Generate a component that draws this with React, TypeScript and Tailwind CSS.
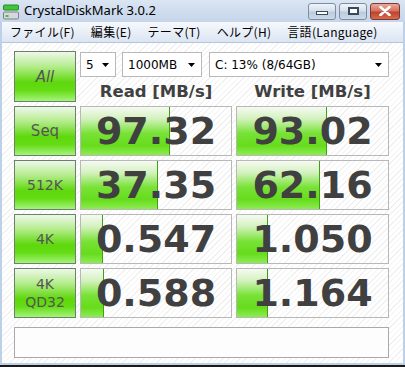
import React from "react";

const rows = [
  { label: "Seq", read: "97.32", rw: 89, write: "93.02", ww: 90 },
  { label: "512K", read: "37.35", rw: 77, write: "62.16", ww: 83 },
  { label: "4K", read: "0.547", rw: 22, write: "1.050", ww: 31 },
  { label: "4K QD32", read: "0.588", rw: 23, write: "1.164", ww: 31 },
];

const hatch =
  "bg-[repeating-linear-gradient(135deg,#ffffff_0px,#ffffff_3px,#f1f1f1_3px,#f1f1f1_4px)]";

function GreenButton({ label }: { label: string }) {
  const parts = label.split(" ");
  return (
    <div className="h-full border border-[#6d7f6d] bg-[linear-gradient(180deg,#eef8ea_0%,#b4ec8c_30%,#5ed80c_62%,#64dc14_78%,#a4f47a_100%)] flex flex-col items-center justify-center text-[#555] font-['DejaVu_Sans',sans-serif] leading-[18px]">
      {parts.length > 1 ? (
        <>
          <span className="text-[14px]">{parts[0]}</span>
          <span className="text-[14px]">{parts[1]}</span>
        </>
      ) : (
        <span className={label === "All" ? "text-[15px] italic" : label === "Seq" ? "text-[15px]" : "text-[14px]"}>
          {label}
        </span>
      )}
    </div>
  );
}

function ValueCell({ value, bar }: { value: string; bar: number }) {
  return (
    <div className={`relative h-[50px] border border-[#b8b8b8] ${hatch} overflow-hidden`}>
      <div
        className="absolute left-0 top-0 bottom-0 border-r border-[#3f9e12] bg-[linear-gradient(180deg,#f6faf2_0%,#d2f1bc_25%,#78e236_55%,#66dc1c_80%,#8cec52_100%)]"
        style={{ width: bar }}
      />
      <div className="relative h-full flex items-center justify-center font-['DejaVu_Sans',sans-serif] font-bold text-[38px] text-[#404040]">
        {value}
      </div>
    </div>
  );
}

function Select({ text, w }: { text: string; w: string }) {
  return (
    <div className={`${w} h-[25px] border border-[#b9b9b9] bg-white flex items-center justify-between pl-[5px] pr-[6px] font-['DejaVu_Sans',sans-serif] text-[12px] text-black`}>
      <span>{text}</span>
      <svg width="7" height="4" viewBox="0 0 7 4">
        <path d="M0 0h7L3.5 4z" fill="#000" />
      </svg>
    </div>
  );
}

function WinButton({ kind }: { kind: "min" | "max" | "close" }) {
  if (kind === "close") {
    return (
      <div className="w-[30px] h-[17px] rounded-[3px] border border-[#7a3a33] bg-[linear-gradient(180deg,#e9a99c_0%,#d7735f_45%,#c0432d_55%,#d56a4f_100%)] flex items-center justify-center">
        <svg width="12" height="10" viewBox="0 0 12 10">
          <path d="M1.5 1l9 8M10.5 1l-9 8" stroke="#fff" strokeWidth="2.6" strokeLinecap="round" />
        </svg>
      </div>
    );
  }
  return (
    <div className="w-[28px] h-[17px] rounded-[3px] border border-[#7d8ea3] bg-[linear-gradient(180deg,#eef3f9_0%,#d7e1ec_45%,#bccbdc_55%,#cdd9e6_100%)] flex items-center justify-center">
      {kind === "min" ? (
        <div className="w-[12px] h-[4px] border border-[#384a5e] bg-white mt-[3px]" />
      ) : (
        <div className="w-[11px] h-[8px] border-[2px] border-[#384a5e] bg-white" />
      )}
    </div>
  );
}

export default function App() {
  return (
    <div className="w-[405px] h-[367px] bg-[#bcd0e8] flex flex-col overflow-hidden">
      {/* title bar */}
      <div className="h-[22px] shrink-0 bg-[linear-gradient(180deg,#dbe6f3_0%,#cfdcee_50%,#c6d6ea_100%)] flex items-center pl-[3px] pr-[5px]">
        <svg width="16" height="16" viewBox="0 0 16 16" className="mt-[1px]">
          <rect x="0.5" y="1" width="15" height="5" rx="1" fill="#3fc63a" stroke="#2b8a27" />
          <rect x="0.5" y="8" width="15" height="7" rx="1" fill="#d5d8da" stroke="#7c8288" />
          <rect x="2.5" y="11" width="3" height="2" fill="#3fc63a" />
        </svg>
        <span className="ml-[5px] font-['Noto_Sans',sans-serif] text-[13px] text-black">CrystalDiskMark 3.0.2</span>
        <div className="ml-auto flex gap-[3px] items-center">
          <WinButton kind="min" />
          <WinButton kind="max" />
          <WinButton kind="close" />
        </div>
      </div>
      {/* frame + client */}
      <div className="flex-1 flex flex-col px-[2px] pb-[2px] border-b-[2px] border-[#1a1a1a]">
        <div className="h-[21px] shrink-0 bg-[linear-gradient(180deg,#f6f8fc_0%,#e9eff8_50%,#dbe5f2_100%)] border-b border-[#b6c6da] flex items-center gap-[16px] pl-[8px] font-['Noto_Sans_CJK_JP',sans-serif] text-[12px] tracking-[0.3px] text-black">
          <span>ファイル(F)</span>
          <span>編集(E)</span>
          <span>テーマ(T)</span>
          <span>ヘルプ(H)</span>
          <span>言語(Language)</span>
        </div>
        <div className={`flex-1 ${hatch} pl-[12px] pt-[8px]`}>
          <div className="grid grid-cols-[62px_152px_153px] gap-x-[4px] gap-y-[4px]">
            <div className="h-[51px]">
              <GreenButton label="All" />
            </div>
            <div className="col-span-2 flex flex-col">
              <div className="flex mt-[1px]">
                <Select text="5" w="w-[36px]" />
                <Select text="1000MB" w="w-[80px] ml-[6px]" />
                <Select text="C: 13% (8/64GB)" w="w-[180px] ml-[7px]" />
              </div>
              <div className="grid grid-cols-[152px_153px] gap-x-[4px] mt-[5px] font-['DejaVu_Sans',sans-serif] font-bold text-[16.5px] text-[#404040] leading-[20px]">
                <div className="text-center">Read [MB/s]</div>
                <div className="text-center">Write [MB/s]</div>
              </div>
            </div>
            {rows.map((r) => (
              <React.Fragment key={r.label}>
                <div className="h-[50px]">
                  <GreenButton label={r.label} />
                </div>
                <ValueCell value={r.read} bar={r.rw} />
                <ValueCell value={r.write} bar={r.ww} />
              </React.Fragment>
            ))}
          </div>
          <div className="mt-[9px] w-[375px] h-[31px] border border-[#a9a9a9] bg-[#fdfdfd]" />
        </div>
      </div>
    </div>
  );
}
